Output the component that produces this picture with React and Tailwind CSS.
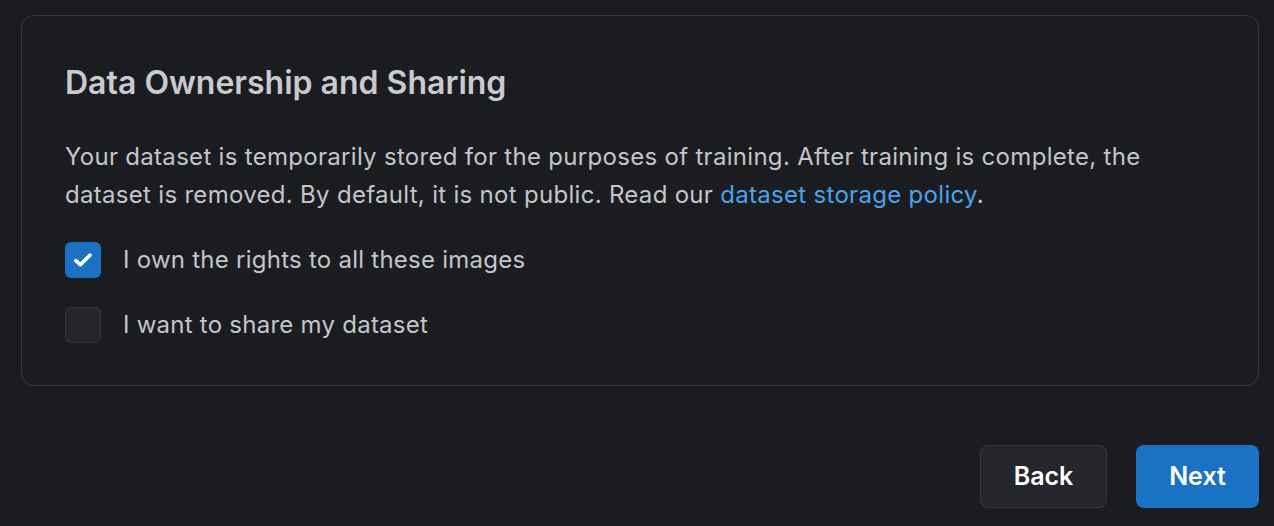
import React from "react";

export default function App() {
  return (
    <div className="min-h-[526px] w-full bg-[#1b1c20] pl-[21px] pr-[15px] pt-[15px] pb-[18px] font-['Inter',sans-serif] antialiased">
      <div className="rounded-[13px] border border-[#36373b] bg-[#1b1c20] px-[43px] pt-[49px] pb-[42px]">
        <h2 className="text-[32px] leading-[36px] font-semibold text-[#c9cacf]">
          Data Ownership and Sharing
        </h2>
        <p className="mt-[37px] mb-[-1px] text-[24px] leading-[38px] tracking-[0.3px] text-[#c4c5ca]">
          Your dataset is temporarily stored for the purposes of training. After training is complete, the
          <br />
          dataset is removed. By default, it is not public. Read our{" "}
          <a className="text-[#4aa3ea]" href="#">dataset storage policy</a>.
        </p>
        <div className="mt-[29px] flex flex-col gap-[29px]">
          <label className="flex items-center gap-[22px]">
            <span className="flex h-[36px] w-[36px] items-center justify-center rounded-[6px] bg-[#1a72c5]">
              <svg width="20" height="16" viewBox="0 0 20 16" fill="none">
                <path d="M2.8 8.6 L7.4 12.6 L17 3.2" stroke="white" strokeWidth="3.6" strokeLinecap="round" strokeLinejoin="round" />
              </svg>
            </span>
            <span className="text-[24px] leading-[36px] tracking-[0.25px] text-[#c4c5ca]">I own the rights to all these images</span>
          </label>
          <label className="flex items-center gap-[22px]">
            <span className="h-[36px] w-[36px] rounded-[6px] border border-[#36373b] bg-[#25262b]" />
            <span className="text-[24px] leading-[36px] tracking-[0.25px] text-[#c4c5ca]">I want to share my dataset</span>
          </label>
        </div>
      </div>
      <div className="mt-[59px] flex justify-end gap-[29px]">
        <button className="h-[63px] w-[127px] rounded-[8px] border border-[#36373b] bg-[#25262b] text-[25px] font-semibold text-white">
          Back
        </button>
        <button className="h-[63px] w-[123px] rounded-[8px] bg-[#1a72c5] text-[25px] font-semibold text-white">
          Next
        </button>
      </div>
    </div>
  );
}
